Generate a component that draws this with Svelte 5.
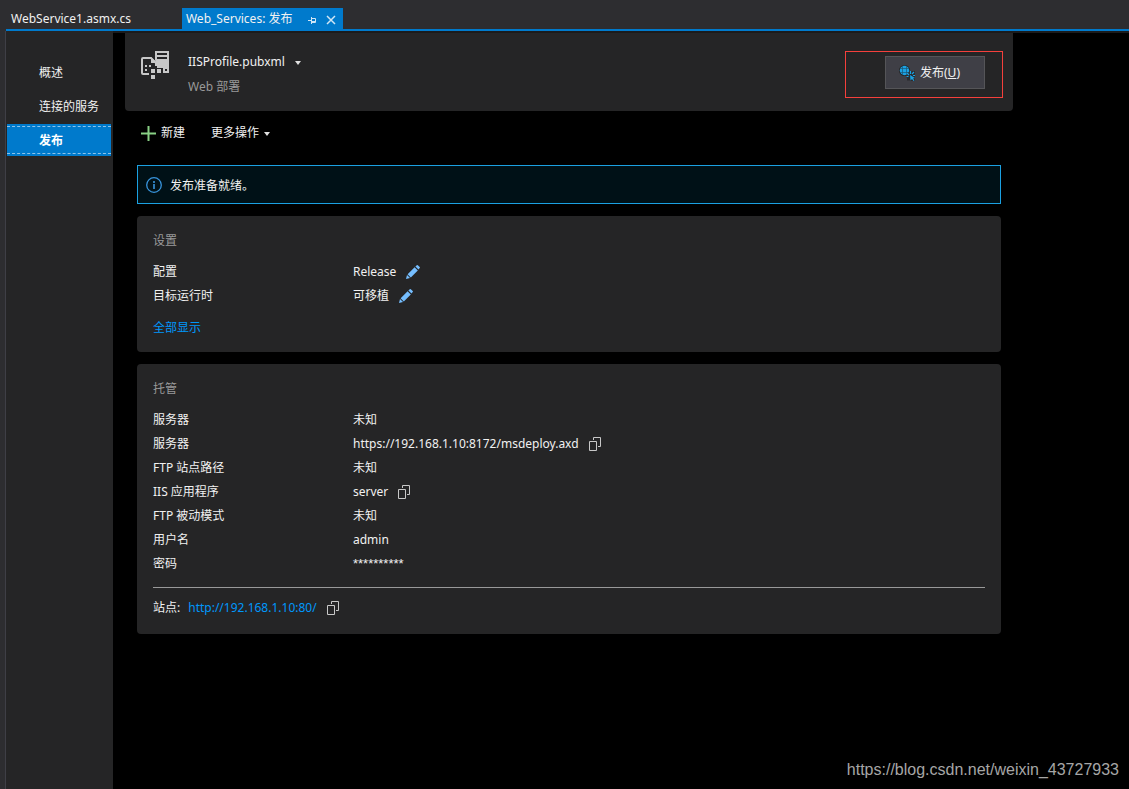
<script lang="ts">
  type Row = {
    label: string;
    value: string;
    action?: 'edit' | 'copy';
    secret?: boolean;
  };

  const sections = ['概述', '连接的服务', '发布'];
  let current = $state('发布');

  const settings: Row[] = [
    { label: '配置', value: 'Release', action: 'edit' },
    { label: '目标运行时', value: '可移植', action: 'edit' }
  ];

  const hosting: Row[] = [
    { label: '服务器', value: '未知' },
    { label: '服务器', value: 'https://192.168.1.10:8172/msdeploy.axd', action: 'copy' },
    { label: 'FTP 站点路径', value: '未知' },
    { label: 'IIS 应用程序', value: 'server', action: 'copy' },
    { label: 'FTP 被动模式', value: '未知' },
    { label: '用户名', value: 'admin' },
    { label: '密码', value: '**********', secret: true }
  ];

  const siteUrl = 'http://192.168.1.10:80/';

  function copy(text: string) {
    navigator.clipboard?.writeText(text);
  }
</script>

{#snippet copyIcon()}
  <svg width="14" height="14" viewBox="0 0 14 14" fill="none" stroke="#c8c8c8" aria-hidden="true">
    <path d="M.5 4.5h7v9h-7z" />
    <path d="M4.5 3V.5h7v9H9" />
  </svg>
{/snippet}

{#snippet editIcon()}
  <svg width="14" height="14" viewBox="0 0 14 14" fill="#75beff" aria-hidden="true">
    <path d="M0 14l1-4 3 3z" />
    <path d="M1.6 9.2L8.6 2.2l3.2 3.2-7 7z" />
    <path d="M9.4 1.5L10.8 0.2q.5-.4 1 0l1.9 1.9q.5.5 0 1L12.5 4.6z" />
  </svg>
{/snippet}

{#snippet rows(items: Row[])}
  <dl class="rows">
    {#each items as item}
      <div class="row">
        <dt>{item.label}</dt>
        <dd>
          <span class:secret={item.secret}>{item.value}</span>
          {#if item.action === 'edit'}
            <button type="button" class="icon-button" aria-label="编辑{item.label}">
              {@render editIcon()}
            </button>
          {:else if item.action === 'copy'}
            <button type="button" class="icon-button" aria-label="复制{item.label}" onclick={() => copy(item.value)}>
              {@render copyIcon()}
            </button>
          {/if}
        </dd>
      </div>
    {/each}
  </dl>
{/snippet}

<div class="window">
  <header class="tabs">
    <button type="button" class="tab">WebService1.asmx.cs</button>
    <div class="tab active">
      <button type="button" class="tab-title">Web_Services: 发布</button>
      <button type="button" class="pin" aria-label="固定">
        <svg width="9" height="7" viewBox="0 0 9 7" fill="none" stroke="#d0e6f5" aria-hidden="true">
          <path d="M0 3.5h3M3.5 0v7M3.5 1.5h4v4M3.5 4.5h4M3.5 5.5h4" />
        </svg>
      </button>
      <button type="button" class="close" aria-label="关闭">
        <svg width="10" height="10" viewBox="0 0 10 10" fill="none" stroke="#d0e6f5" stroke-width="1.5" aria-hidden="true">
          <path d="M1 1l8 8M9 1L1 9" />
        </svg>
      </button>
    </div>
  </header>

  <div class="body">
    <nav class="sidebar">
      {#each sections as section}
        <button
          type="button"
          class="nav-item"
          class:selected={section === current}
          onclick={() => (current = section)}
        >
          <span>{section}</span>
        </button>
      {/each}
    </nav>

    <main class="page">
      <div class="profile">
        <svg width="30" height="30" viewBox="0 0 30 30" aria-hidden="true">
          <path d="M15 1h14v22h-6v-5h-6v-3L15 10z" fill="#c8c8c8" />
          <path d="M17 4h10M17 8h10" stroke="#252526" stroke-width="2" />
          <path d="M25 19h2v2h-2z" fill="#252526" />
          <path d="M9 24H3q-1 0-1-1V9q0-1 1-1h8l5 5v3" fill="none" stroke="#c8c8c8" stroke-width="2" />
          <path d="M11 7v6h6z" fill="#c8c8c8" />
          <path d="M5 15h2v2H5zM9 15h2v2H9zM5 19h2v2H5zM11 19h4v4h-4zM17 19h4v4h-4zM11 25h4v4h-4z" fill="#c8c8c8" />
        </svg>
        <div class="profile-text">
          <button type="button" class="profile-name">
            IISProfile.pubxml
            <span class="caret"></span>
          </button>
          <span class="profile-kind">Web 部署</span>
        </div>
        <div class="publish-frame">
          <button type="button" class="publish">
            <svg width="16" height="16" viewBox="0 0 16 16" fill="none" aria-hidden="true">
              <circle cx="5.5" cy="5.5" r="5.5" fill="#252526" />
              <path d="M8 6h8v10h-4L7 12z" fill="#2b2b2e" />
              <circle cx="5.5" cy="5.5" r="4.7" fill="#1ba1e2" />
              <path d="M1 3.5h9M1 7.5h9M3.5 1v9M7.5 1v9" stroke="#1c5675" stroke-width="0.7" />
              <path d="M8 7.5h8v8H8z" fill="#2b2b2e" />
              <path d="M11.5 6v3M8 8l2 2M15 7l-2 2M14 10.5h2M7.5 11.5h2" stroke="#1ba1e2" stroke-width="1.2" />
              <path d="M11 10l5 3-2 .5 1.5 2-1 .5-1.5-2-1.500 1.500z" fill="#1ba1e2" />
            </svg>
            <span>发布(<u>U</u>)</span>
          </button>
        </div>
      </div>

      <div class="content">
        <div class="toolbar">
          <button type="button" class="tool">
            <svg width="15" height="15" viewBox="0 0 15 15" fill="none" stroke="#89d185" stroke-width="2" aria-hidden="true">
              <path d="M7.5 0v15M0 7.5h15" />
            </svg>
            新建
          </button>
          <button type="button" class="tool">
            更多操作
            <span class="caret"></span>
          </button>
        </div>

        <div class="notice" role="status">
          <svg width="16" height="16" viewBox="0 0 16 16" fill="none" stroke="#3794dc" aria-hidden="true">
            <circle cx="8" cy="8" r="7.3" stroke-width="1.3" />
            <path d="M8 4v2M8 7v5" stroke-width="1.6" />
          </svg>
          <span>发布准备就绪。</span>
        </div>

        <section class="card">
          <h2>设置</h2>
          {@render rows(settings)}
          <a class="show-all" href="#all">全部显示</a>
        </section>

        <section class="card">
          <h2>托管</h2>
          {@render rows(hosting)}
          <div class="site">
            <span>站点:</span>
            <a href={siteUrl}>{siteUrl}</a>
            <button type="button" class="icon-button" aria-label="复制站点" onclick={() => copy(siteUrl)}>
              {@render copyIcon()}
            </button>
          </div>
        </section>
      </div>

      <footer class="watermark">https://blog.csdn.net/weixin_43727933</footer>
    </main>
  </div>
</div>

<style>
  :global(body) {
    margin: 0;
    background: #000;
  }

  .window {
    display: flex;
    flex-direction: column;
    min-height: 100vh;
    background: #2d2d30;
    color: #f1f1f1;
    font-family: 'Noto Sans', 'Noto Sans CJK SC', sans-serif;
    font-size: 12px;
    line-height: 24px;
  }

  button {
    padding: 0;
    border: 0;
    background: none;
    color: inherit;
    font: inherit;
    cursor: pointer;
  }

  svg {
    display: block;
    flex: none;
  }

  a {
    color: #0097fb;
    text-decoration: none;
  }

  .icon-button {
    display: flex;
    align-items: center;
    height: 24px;
  }

  .caret {
    margin-top: 2px;
    border: 3px solid transparent;
    border-top: 4px solid #e0e0e0;
    border-bottom: 0;
  }

  /* Document tabs */
  .tabs {
    display: flex;
    align-items: flex-end;
    gap: 45px;
    height: 29px;
    margin-left: 6px;
    border-bottom: 2px solid #007acc;
  }

  .tab {
    padding: 0 6px 0 5px;
    line-height: 21px;
    white-space: nowrap;
  }

  .active {
    display: flex;
    align-items: center;
    padding: 0 7px 0 4px;
    background: #007acc;
  }

  .pin {
    margin: 3px 9px 0 16px;
  }

  .close {
    margin-top: 3px;
  }

  /* Section list */
  .body {
    display: flex;
    flex: 1;
    margin-left: 5px;
    border-left: 1px solid #3f3f46;
  }

  .sidebar {
    display: flex;
    flex-direction: column;
    flex: none;
    box-sizing: border-box;
    gap: 2px;
    width: 107px;
    padding: 25px 0 0 1px;
    background: #252526;
  }

  .nav-item {
    width: 104px;
    padding: 2px 0;
    text-align: left;
    white-space: nowrap;
  }

  .nav-item span {
    display: block;
    padding: 2px 0 0 32px;
    border: 1px dashed transparent;
    border-width: 1px 0;
  }

  .selected {
    background: #007acc;
    color: #fff;
    font-weight: 700;
  }

  .selected span {
    border-color: #8cc4ea;
  }

  /* Publish page */
  .page {
    display: flex;
    flex-direction: column;
    flex: 1;
    min-width: 0;
    padding: 0 10px 7px 12px;
    border-top: 2px solid #1b1b1c;
    background: #000;
  }

  .profile {
    display: flex;
    align-items: flex-start;
    box-sizing: border-box;
    width: 100%;
    max-width: 888px;
    padding: 17px 10px 12px 15px;
    border-radius: 0 0 4px 4px;
    background: #252526;
  }

  .profile-text {
    display: flex;
    flex-direction: column;
    margin-left: 18px;
  }

  .profile-name {
    display: flex;
    align-items: center;
    gap: 10px;
  }

  .profile-kind {
    margin-top: 1px;
    color: #999;
  }

  .publish-frame {
    margin: 1px 0 0 auto;
    padding: 4px 17px 8px 39px;
    border: 1px solid #f5403c;
  }

  .publish {
    display: flex;
    align-items: center;
    gap: 5px;
    width: 100px;
    padding: 4px 13px 3px;
    border: 1px solid #555558;
    background: #3f3f46;
    white-space: nowrap;
  }

  .content {
    max-width: 864px;
    width: calc(100% - 12px);
    margin-left: 12px;
  }

  .toolbar {
    display: flex;
    gap: 26px;
    padding: 10px 4px 20px;
  }

  .tool {
    display: flex;
    align-items: center;
    gap: 5px;
  }

  .notice {
    display: flex;
    align-items: center;
    gap: 8px;
    padding: 6px 8px 5px;
    border: 1px solid #1ba1e2;
    background: #001117;
  }

  .notice span {
    padding-top: 2px;
  }

  .card {
    margin-top: 12px;
    padding: 13px 16px 12px;
    border-radius: 4px;
    background: #252526;
  }

  h2 {
    margin: 0 0 7px;
    color: #999;
    font-size: 12px;
    font-weight: 400;
  }

  .rows {
    margin: 0;
  }

  .row {
    display: flex;
  }

  dt {
    width: 200px;
    flex: none;
  }

  dd {
    display: flex;
    gap: 10px;
    margin: 0;
  }

  .secret {
    font-family: 'Liberation Sans', sans-serif;
    font-size: 13px;
  }

  .show-all {
    display: block;
    width: max-content;
    margin-top: 8px;
  }

  .site {
    display: flex;
    gap: 8px;
    margin-top: 11px;
    padding: 8px 0 2px;
    border-top: 1px solid #999;
  }

  .site .icon-button {
    margin-left: 2px;
  }

  .watermark {
    margin-top: auto;
    color: #a6a6a6;
    font-family: 'Liberation Sans', sans-serif;
    font-size: 16px;
    text-align: right;
  }
</style>
